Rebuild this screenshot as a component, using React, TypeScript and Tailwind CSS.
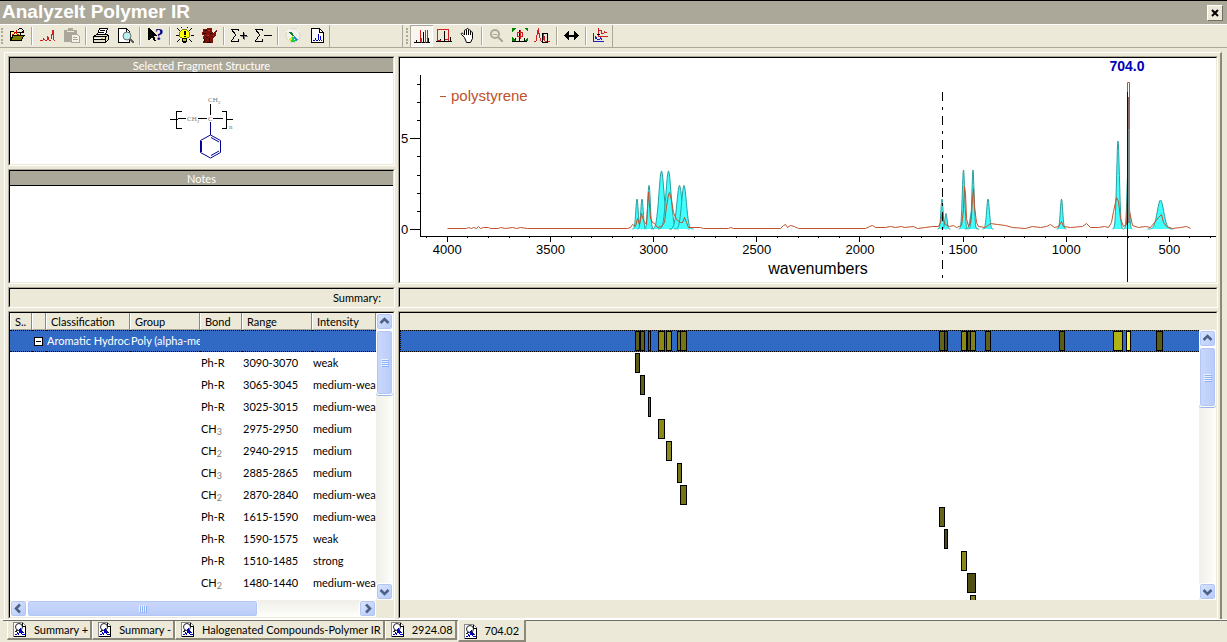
import React, { useState } from 'react'
import clsx from 'clsx'

interface Band {
  bond: string
  sub?: string
  from: number
  to: number
  intensity: string
  color: string
}

const BANDS: Band[] = [
  { bond: 'Ph-R', from: 3090, to: 3070, intensity: 'weak', color: '#5c5c14' },
  { bond: 'Ph-R', from: 3065, to: 3045, intensity: 'medium-weak', color: '#60601a' },
  { bond: 'Ph-R', from: 3025, to: 3015, intensity: 'medium-weak', color: '#5f7058' },
  { bond: 'CH', sub: '3', from: 2975, to: 2950, intensity: 'medium', color: '#8b8b14' },
  { bond: 'CH', sub: '2', from: 2940, to: 2915, intensity: 'medium', color: '#8b8b20' },
  { bond: 'CH', sub: '3', from: 2885, to: 2865, intensity: 'medium', color: '#747418' },
  { bond: 'CH', sub: '2', from: 2870, to: 2840, intensity: 'medium-weak', color: '#757514' },
  { bond: 'Ph-R', from: 1615, to: 1590, intensity: 'medium-weak', color: '#64641a' },
  { bond: 'Ph-R', from: 1590, to: 1575, intensity: 'weak', color: '#4a4a1e' },
  { bond: 'Ph-R', from: 1510, to: 1485, intensity: 'strong', color: '#8b8b14' },
  { bond: 'CH', sub: '2', from: 1480, to: 1440, intensity: 'medium-weak', color: '#505014' },
  { bond: 'CH', sub: '3', from: 1465, to: 1440, intensity: 'medium', color: '#80801e' },
  { bond: 'CH', sub: '3', from: 1393, to: 1368, intensity: 'medium', color: '#60601a' },
  { bond: 'Ph-R', from: 1035, to: 1010, intensity: 'medium', color: '#5c5c14' },
  { bond: 'Ph-R', from: 773, to: 730, intensity: 'strong', color: '#b2b214' },
  { bond: 'Ph-R', from: 708, to: 690, intensity: 'strong', color: '#f2f23c' },
  { bond: 'Ph-R', from: 562, to: 535, intensity: 'medium', color: '#5c5c14' },
]

const TABS = ['Summary +', 'Summary -', 'Halogenated Compounds-Polymer IR', '2924.08', '704.02']

// wavenumber -> x and absorbance -> y inside the plot
const wx = (w: number) => 47.3 + (4000 - w) * 0.2063
const ay = (a: number) => 171 - a * 18.15

/* ---------- panels ---------- */

function Sunken({ children, className, bodyClass }: { children?: React.ReactNode; className?: string; bodyClass?: string }) {
  return (
    <div className={clsx('min-h-0 min-w-0 border border-b-white border-l-[#aca899] border-r-white border-t-[#aca899]', className)}>
      <div className={clsx('h-full overflow-hidden border border-b-[#ece9d8] border-l-black border-r-[#ece9d8] border-t-black', bodyClass)}>
        {children}
      </div>
    </div>
  )
}

function PanelTitle({ children }: { children: React.ReactNode }) {
  return (
    <h2 className="h-[15px] border-b border-black bg-[#aca899] text-center text-[11px] leading-[15px] text-white">{children}</h2>
  )
}

/* ---------- toolbar ---------- */

function Tool({ label, active, narrow, children }: { label: string; active?: boolean; narrow?: boolean; children: React.ReactNode }) {
  return (
    <button
      aria-label={label}
      className={clsx(
        'flex h-[22px] shrink-0 items-center',
        narrow ? 'w-[23px]' : 'w-6',
        active && 'bg-[#f8f6ee] shadow-[inset_1px_1px_0_#aca899,inset_-1px_-1px_0_#fff]',
      )}>
      <svg width="24" height="22" viewBox="0 0 24 22" fill="none" shapeRendering="crispEdges" className="shrink-0">
        {children}
      </svg>
    </button>
  )
}

function Sep() {
  return <div className="mx-[2px] my-[2px] w-[2px] shrink-0 border-l border-[#aca899] border-r border-r-white" />
}

function Grip() {
  return <div className="my-[3px] w-[2px] shrink-0 border-l-2 border-dotted border-[#aca899]" />
}

function MainTools() {
  return (
    <div className="flex h-[22px] border-r border-[#aca899] pl-px">
      <Grip />
      <div className="w-[2px]" />
      <Tool label="Open">
        <path d="M5 6h4l1 1h5v3h-7l-3 5z" fill="#ffff80" />
        <path d="M8 10.500h11l-3 5H5.500z" fill="#808000" stroke="#000" />
        <path d="M5.500 15V6.500h3l1 1h6V10" stroke="#000" />
        <path d="M7 9.500h2M9.500 9V7M11.500 9V5M12 9.500h2" stroke="#e00000" />
        <path d="M13 4.500h1M14 3.500h3M17 4.500h1M18.500 5v3M16 7.500h3M17 6.500h2" stroke="#000" />
      </Tool>
      <Sep />
      <Tool label="Spectrum">
        <path d="M5 15.500h3M8.500 15v-2M9.500 14v1M10 15.500h2M12.500 15v-4M13.500 12v3M14 15.500h2M16.500 14V9M17.500 10V5M18.500 5v10M19 15.500h1" stroke="#d02020" />
      </Tool>
      <Tool label="Paste">
        <path d="M5 5h4V3h5v2h4v12H5z" fill="#aca899" />
        <path d="M8 6.500h7" stroke="#ece9d8" />
        <path d="M12.500 9.500h6l2 2v6h-8z" fill="#f4f2e8" stroke="#aca899" />
        <path d="M14 12.500h4M14 14.500h5" stroke="#aca899" />
      </Tool>
      <Sep />
      <Tool label="Print">
        <path d="M8.500 9.500l2-6h8l-2 6z" fill="#fff" stroke="#000" />
        <path d="M11 5.500h5M10 7.500h5" stroke="#000" />
        <path d="M4.500 11.500l3-2h11l1 1v4l-3 2.500h-12z" fill="#e4e0d0" stroke="#000" />
        <path d="M4.500 11.500h12l3-1M16.500 12v4M5 14.500h11" stroke="#000" />
        <path d="M6 13h9" stroke="#fff" />
        <path d="M12 13.500h2" stroke="#d0c000" />
      </Tool>
      <Tool label="Print preview">
        <path d="M5.500 3.500h8l3 3v11h-11z" fill="#fff" stroke="#000" />
        <path d="M13.500 4v3h3" stroke="#000" />
        <circle cx="14" cy="11" r="4" fill="#b8f0f0" stroke="#707070" shapeRendering="auto" />
        <path d="M17 14l4 4" stroke="#606060" strokeWidth="2" />
      </Tool>
      <Sep />
      <Tool label="Context help">
        <path d="M5 3v12h1l3-3 2 4h2l-2-5h3v-1L6 3z" fill="#000" />
        <text x="12" y="15" className="fill-[#000080] font-['Liberation_Serif',serif] text-[17px] font-bold">?</text>
      </Tool>
      <Sep />
      <Tool label="Hints">
        <path d="M4 3l3 3M19 3l-3 3M4 17l3-3M19 17l-3-3M3 10.500h3M18 10.500h3M8.500 2v1M14.500 2v1" stroke="#000" />
        <path d="M9.500 4.500h4l3 3v4l-3 2h-4l-3-2v-4z" fill="#ffff00" stroke="#808000" />
        <path d="M9.500 13.500h4v3h-4z" fill="#c8c800" stroke="#000" />
        <path d="M11 5.500h1.500v4H11zM11 10.500h1.500V12H11z" fill="#000" />
        <path d="M10 17.500h3" stroke="#000" />
      </Tool>
      <Tool label="Expert">
        <path d="M6 4l3 0 2-1 4 0v3l1 2 3-3 1 0-1 5-3 3v5H6l1-3-1-2 1-3H5z" fill="#7a1408" />
        <path d="M8 5.500h2M13 8.500h2M9 12.500h2M7.500 14v3M12.500 13v4M6 8.500h3M10 17.500h4" stroke="#200000" />
        <path d="M11 5.500h2M10 10.500h2M16 10.500h1" stroke="#c83020" />
      </Tool>
      <Sep />
      <Tool label="Add to summary">
        <path d="M11.500 6V4.500H4.500L8.500 10l-4 6h7V14" stroke="#000" />
        <path d="M5 5l4 5" stroke="#000" />
        <path d="M14 11.500h7M17.500 8v7" stroke="#808080" />
        <path d="M13 10.500h7M16.500 7v7" stroke="#000" />
      </Tool>
      <Tool label="Remove from summary">
        <path d="M11.500 6V4.500H4.500L8.500 10l-4 6h7V14" stroke="#000" />
        <path d="M5 5l4 5" stroke="#000" />
        <path d="M13 10.500h8" stroke="#000" />
      </Tool>
      <Sep />
      <Tool label="Colour scale">
        <circle cx="12" cy="10.500" r="7" fill="#f2f1ea" stroke="#dad8cc" shapeRendering="auto" />
        <path d="M6 7l3-3M16 4l3 3" stroke="#fff" />
        <path d="M8 7h2l2 2 1 2h-2z" fill="#108030" />
        <path d="M12 10l-4 5 2 2z" fill="#e8e020" />
        <path d="M12 10l-2 7h4z" fill="#20d040" />
        <path d="M12.500 10.500l1.500 6 3-2z" fill="#2090d0" />
      </Tool>
      <Tool label="Report">
        <path d="M6.500 3.500h8l4 4v10h-12z" fill="#fff" stroke="#000" />
        <path d="M14.500 4v3.500h4" stroke="#000" />
        <path d="M8 15.500h2M10.500 15v-2M11 15.500h2M13.500 15V9M14 15.500h1M15.500 15v-4M16 15.500h1" stroke="#0000c0" />
      </Tool>
    </div>
  )
}

function PlotTools() {
  return (
    <div className="ml-[72px] flex h-[22px] border-l border-r border-[#aca899] pl-[3px]">
      <Grip />
      <div className="w-[2px]" />
      <Tool narrow active label="Show peaks">
        <path d="M4 17.500h16M6.500 15v2M13.500 7v10M18.500 13v4" stroke="#000" />
        <path d="M10.500 5v12M11.500 13v5M15.500 5v13M17.500 5v12" stroke="#d02020" />
      </Tool>
      <Tool narrow label="Select region">
        <path d="M3 16.500h16M7.500 14v2M11.500 6v10M17.500 12v4" stroke="#000" />
        <path d="M4.500 15.500v-11h11v11M4 15h4M12 14.500h4" stroke="#d02020" />
      </Tool>
      <Tool narrow label="Pan">
        <path
          d="M8.500 12.500l-3-3c-1-1 .5-2 1.500-1l1.500 1.500V5.500c0-1 2-1 2 0V4.500c0-1.500 2-1.500 2 0v1c0-1 2-1 2 0v2c0-1 2-1 2 0v6l-2 4h-4z"
          fill="#fff" stroke="#000" shapeRendering="auto" />
        <path d="M10.500 5v5M12.500 5v5M14.500 6v4" stroke="#000" />
      </Tool>
      <Sep />
      <Tool narrow label="Zoom out">
        <circle cx="10" cy="9" r="4" stroke="#aca899" strokeWidth="2" shapeRendering="auto" />
        <path d="M8 9.500h4" stroke="#aca899" />
        <path d="M13 12l5 5" stroke="#aca899" strokeWidth="2" />
      </Tool>
      <Tool narrow label="Full scale">
        <path d="M4 16.500h15M7.500 13v3M11.500 5v12M16.500 13v3" stroke="#000" />
        <path d="M9.500 7.500h5v4h-5zM12.500 5v9" stroke="#d02020" />
        <path d="M4 3h4l-4 4zM20 3h-4l4 4zM4 16v-4l4 4zM20 16v-4l-4 4z" fill="#008000" />
      </Tool>
      <Tool narrow label="Peak scale">
        <path d="M3 16.500h2M5.500 16v-6M6.500 10V5M7.500 3v6M8.500 8v5M9.500 13v3M10 16.500h2M12.500 15V9M13.500 11v5M14 16.500h5" stroke="#d02020" />
        <path d="M11.500 8.500h5v9h-5z" stroke="#000" />
      </Tool>
      <Sep />
      <Tool narrow label="Fit width">
        <path d="M4 10.500l5-5v4h5v-4l5 5-5 5v-4H9v4z" fill="#000" />
      </Tool>
      <Sep />
      <Tool narrow label="Overlay">
        <path d="M9.500 3v8.500h9M10 5.500h2v3h3M15.500 8V6M16 7.500h2" stroke="#d02020" />
        <path d="M4.500 8v8.500h10M6.500 14v-3M7.500 12v2M8 14.500h3M11.500 14v-2M12.500 13v2" stroke="#2020c0" />
        <path d="M8 9.500h3" stroke="#000" />
      </Tool>
    </div>
  )
}

/* ---------- scroll bars ---------- */

const CHEVRON = {
  up: 'M4.500 10l4-4 4 4',
  down: 'M4.500 7l4 4 4-4',
  left: 'M10 4.500l-4 4 4 4',
  right: 'M7 4.500l4 4-4 4',
}

function Arrow({ dir }: { dir: keyof typeof CHEVRON }) {
  return (
    <button
      aria-label={`Scroll ${dir}`}
      className="h-[17px] w-[17px] shrink-0 rounded-[3px] border border-white bg-linear-to-br from-[#dbe5fe] to-[#b5c9f8] shadow-[inset_0_0_0_1px_#b3c6f4]">
      <svg width="15" height="15" viewBox="1 1 15 15" fill="none">
        <path d={CHEVRON[dir]} stroke="#4d6185" strokeWidth="2.500" />
      </svg>
    </button>
  )
}

function VScroll({ thumb }: { thumb: string }) {
  return (
    <div className="flex w-[17px] shrink-0 flex-col bg-linear-to-r from-[#f0efe8] to-[#fefefb]">
      <Arrow dir="up" />
      <div className="flex-1">
        <div className={clsx('flex flex-col items-center justify-center gap-px rounded-[3px] border border-white bg-linear-to-r from-[#cbd8fd] to-[#b8cbf8] shadow-[inset_0_0_0_1px_#b3c6f4,0_1px_0_#9cb4e8]', thumb)}>
          {[0, 1, 2, 3].map(i => <span key={i} className="h-px w-[7px] bg-[#eef4fe] shadow-[1px_1px_0_#8cb0f8]" />)}
        </div>
      </div>
      <Arrow dir="down" />
    </div>
  )
}

function HScroll() {
  return (
    <div className="flex h-[17px] flex-1 bg-linear-to-b from-[#f0efe8] to-[#fefefb]">
      <Arrow dir="left" />
      <div className="flex-1">
        <div className="flex h-full w-[231px] items-center justify-center gap-px rounded-[3px] border border-white bg-linear-to-b from-[#cbd8fd] to-[#b8cbf8] shadow-[inset_0_0_0_1px_#b3c6f4]">
          {[0, 1, 2, 3].map(i => <span key={i} className="h-[7px] w-px bg-[#eef4fe] shadow-[1px_1px_0_#8cb0f8]" />)}
        </div>
      </div>
      <Arrow dir="right" />
    </div>
  )
}

/* ---------- structure ---------- */

function Structure() {
  return (
    <svg width="64" height="64" viewBox="0 0 64 64" fill="none" shapeRendering="crispEdges" className="mx-auto mt-[23px]">
      <g stroke="#000">
        <path d="M0 23.500h8M11.500 15.500h-5v17h5M8 22.500h8M28 22.500h9M43 22.500h10M52 15.500h4.500v17H52M56 23.500h7M40.500 8v11" />
      </g>
      <g className="fill-[#777777] font-['Liberation_Serif',serif] text-[7px]">
        <text x="38" y="6">CH<tspan className="text-[5px]" dy="2">3</tspan></text>
        <text x="17" y="25">CH<tspan className="text-[5px]" dy="2">2</tspan></text>
        <text x="38" y="25">C</text>
        <text x="59" y="33">n</text>
      </g>
      <path d="M40.500 26v13" stroke="#000080" />
      <g stroke="#000090" shapeRendering="auto">
        <path d="M40.500 39l10 5.500v12l-10 5.500-10-5.500v-12zM41 41.500l8 4.500M41 59.500l8-4.500" />
        <path d="M31.500 45v11" stroke="#0000ff" />
      </g>
    </svg>
  )
}

/* ---------- spectrum ---------- */

// [centre x, absorbance, spread]
const PEAKS: [number, number, number][] = [
  [237, 1.65, 1.2], [242, 1.65, 1.2], [249, 2.4, 1.3],
  [261.500, 3.2, 2.6], [268.500, 3.2, 2.6], [279.500, 2.4, 2.6], [284, 2.4, 2.4],
  [542, 1.65, 1.1], [546, 0.85, 1.1], [563.500, 3.25, 1.2], [572, 1, 1.8], [573, 3.25, 1.1],
  [588, 1.65, 1.4], [661.500, 1.65, 1.2], [718, 4.85, 1.4], [728, 3.3, 1.1], [760.500, 1.6, 3.2],
]

function peakPath([cx, h, s]: [number, number, number]) {
  let d = `M${cx - 4 * s} ${ay(0)}`
  for (let t = -4; t <= 4; t += 0.25) {
    d += `L${(cx + t * s).toFixed(1)} ${ay(h * Math.exp((-t * t) / 2)).toFixed(1)}`
  }
  return d
}

const TRACE =
  '47,170 66,170 68,169 71,170 73,169 76,170 78,168 80,170 83,169 88,169 90,170 98,170 100,169 105,170 112,169 116,170 120,169 127,170 ' +
  '227,170 230,169 232,166 235,168 237,160 239,166 241,155 243,162 246,166 247,150 248,134 250,160 252,164 254,165 257,169 261,168 ' +
  '264,164 266,148 268,136 269,134 271,142 273,154 276,161 280,164 282,164 284,159 286,164 288,169 300,169 303,170 328,170 330,169 ' +
  '333,170 380,170 383,167 385,166 387,169 390,167 394,168 398,170 465,170 469,168 472,167 475,169 485,169 490,168 495,169 501,168 ' +
  '504,169 513,168 517,170 525,169 532,168 538,168 540,164 541,158 542,154 543,162 545,166 549,168 553,167 556,169 561,167 562,160 ' +
  '563,150 564,128 565,135 566,160 568,168 570,164 571,158 572,140 573,130 574,148 576,164 578,168 585,169 590,165 597,166 605,167 ' +
  '612,169 625,170 632,168 640,169 646,168 650,166 654,169 658,168 661,163 663,168 670,169 682,168 686,165 690,169 698,169 704,168 ' +
  '708,169 711,164 713,153 715,144 716,139 718,143 720,160 723,168 726,166 727,140 727,24 729,24 729,153 732,167 738,169 ' +
  '745,168 750,169 754,164 758,159 761,156 763,164 766,168 772,170 780,169 786,168 790,170'

function Spectrum() {
  const minor: number[] = []
  for (let w = 4100; w >= 300; w -= 100) minor.push(w)
  const major = [4000, 3500, 3000, 2500, 2000, 1500, 1000, 500]

  return (
    <svg viewBox="0 0 816 224" className="h-auto w-full font-['Liberation_Sans',Arial,sans-serif]" role="img" aria-label="Polystyrene spectrum">
      <g stroke="#000" fill="none" shapeRendering="crispEdges">
        <path d="M20.500 17v162M20 178.500h796" />
        {[1, 2, 3, 4, 6, 7, 8].map(v => <path key={v} d={`M17 ${Math.round(ay(v)) + 0.5}h3`} />)}
        <path d="M10 80.500h10M10 171.500h10" />
        {minor.map(w => <path key={w} d={`M${Math.floor(wx(w)) + 0.5} 179v1`} />)}
        {major.map(w => <path key={w} d={`M${Math.floor(wx(w)) + 0.5} 179v5`} />)}
      </g>

      <g fill="#40ffff" stroke="#2b9f9f">
        {PEAKS.map(p => <path key={p[0]} d={peakPath(p)} />)}
      </g>
      <polyline points={TRACE} transform="translate(0.5 0.5)" fill="none" stroke="#c0512b" strokeLinejoin="round" />
      <g shapeRendering="crispEdges">
        <path d="M729 39v32" stroke="#8a6a60" strokeWidth="2" />
        <path d="M729 71v94" stroke="#7d8a86" strokeWidth="2" />
        <path d="M727.500 34v190" stroke="#0000a0" />
        <path d="M542.500 34v186" stroke="#000" strokeDasharray="9 6 3 6" />
      </g>

      <g className="fill-black text-[13px]">
        <text x="1" y="85">5</text>
        <text x="1" y="176">0</text>
        {major.map(w => <text key={w} x={wx(w)} y="196" textAnchor="middle">{w}</text>)}
      </g>
      <text x="418" y="216" textAnchor="middle" className="fill-black text-[16px]">wavenumbers</text>
      <path d="M40 38.500h6" stroke="#c0512b" shapeRendering="crispEdges" />
      <text x="51" y="43" className="fill-[#c0512b] text-[15px]">polystyrene</text>
      <text x="727" y="13" textAnchor="middle" className="fill-[#0000b4] text-[14px] font-bold">704.0</text>
    </svg>
  )
}

/* ---------- band table and map ---------- */

const COLUMNS = [
  { label: 'S..', width: 'w-[22px]' },
  { label: '', width: 'w-[14px]' },
  { label: 'Classification', width: 'w-[84px]' },
  { label: 'Group', width: 'w-[70px]' },
  { label: 'Bond', width: 'w-[42px]' },
  { label: 'Range', width: 'w-[70px]' },
  { label: 'Intensity', width: 'w-[64px]' },
]

function BandTable() {
  const [open, setOpen] = useState(true)
  const picked = 'h-[22px] overflow-hidden border-y border-dotted border-black bg-[#316ac5] p-0 pl-px'
  const cell = 'h-[22px] overflow-hidden p-0 pl-px'

  return (
    <table className="w-[366px] table-fixed border-separate border-spacing-0 whitespace-nowrap text-[11px] leading-[14px]">
      <thead>
        <tr>
          {COLUMNS.map((c, i) => (
            <th key={i} className={clsx('h-[17px] overflow-hidden border-b border-l border-r border-b-[#aca899] border-l-white border-r-[#8c897a] bg-[#ece9d8] p-0 pl-1 pt-px text-left font-normal', c.width)}>
              {c.label}
            </th>
          ))}
        </tr>
      </thead>
      <tbody>
        <tr className="text-white">
          <td className={picked} />
          <td className={picked}>
            <button aria-label="Collapse group" onClick={() => setOpen(!open)}
              className="ml-px flex h-[9px] w-[9px] items-center justify-center border border-black bg-white">
              <span className="h-px w-[5px] bg-black" />
            </button>
          </td>
          <td className={picked}>Aromatic Hydroca</td>
          <td className={picked}>Poly (alpha-me</td>
          <td className={picked} />
          <td className={picked} />
          <td className={picked} />
        </tr>
        {open && BANDS.slice(0, 11).map(b => (
          <tr key={b.from}>
            <td colSpan={4} className={cell} />
            <td className={cell}>{b.bond}{b.sub && <sub className="text-[9px] text-[#808080]">{b.sub}</sub>}</td>
            <td className={cell}>{b.from}-{b.to}</td>
            <td className={cell}>{b.intensity}</td>
          </tr>
        ))}
      </tbody>
    </table>
  )
}

function Bar({ band }: { band: Band }) {
  const left = Math.round(wx(band.from) - 0.3)
  const right = Math.round(wx(band.to) - 0.3) + 1
  return (
    <div className="absolute top-px h-5 border border-black" style={{ left, width: right - left, background: band.color }} />
  )
}

function BandMap() {
  return (
    <div className="min-w-0 flex-1 overflow-hidden bg-white">
      <div className="relative h-[22px] bg-[#316ac5]">
        <div className="h-full border-y border-l border-dotted border-black" />
        {BANDS.map(b => <Bar key={b.from} band={b} />)}
      </div>
      {BANDS.slice(0, 12).map(b => (
        <div key={b.from} className="relative h-[22px]"><Bar band={b} /></div>
      ))}
    </div>
  )
}

/* ---------- tabs ---------- */

function Tab({ label, active, onClick }: { label: string; active: boolean; onClick: () => void }) {
  return (
    <button
      role="tab"
      aria-selected={active}
      onClick={onClick}
      className={clsx(
        'flex shrink-0 items-center gap-[7px] border-b-2 border-l border-r-2 border-b-[#8c897a] border-l-white border-r-[#8c897a] bg-[#ece9d8] pl-[5px] pr-[2px] text-[11px] leading-[14px]',
        active ? 'relative -mt-px ml-px h-[22px] pr-[5px] pt-[2px]' : 'h-[19px]',
      )}>
      <svg width="14" height="15" viewBox="0 0 14 15" fill="none" shapeRendering="crispEdges">
        <path d="M.5.500h9l3 3v11H.5z" fill="#fff" stroke="#888" />
        <path d="M9.500 1v3h3M.500 14.500h12V5" stroke="#000" />
        <circle cx="6" cy="5" r="3.500" stroke="#222" shapeRendering="auto" />
        <path d="M4.500 8l-2 2M7.500 8l3 3" stroke="#222" />
        <path d="M2 12.500h2M4.500 12v-2M5 11.500h1M6.500 11V7M7.500 6v4M8.500 9v3M7 10.500h3M9 12.500h3M5 12.500h1" stroke="#0000c0" />
      </svg>
      {label}
    </button>
  )
}

export default function App() {
  const [tab, setTab] = useState('704.02')

  return (
    <div className="flex h-screen min-h-[480px] flex-col overflow-hidden bg-[#ece9d8] font-[Lato,Arial,sans-serif] text-black">
      <header className="flex h-[25px] shrink-0 items-center justify-between border-b border-t border-b-white border-t-black bg-[#aca899] pl-[2px] pr-1">
        <h1 className="pb-[2px] font-['Liberation_Sans',Arial,sans-serif] text-[19px] font-bold leading-[21px] text-white">AnalyzeIt Polymer IR</h1>
        <button aria-label="Close" className="flex h-4 w-4 items-center justify-center border border-b-[#716f64] border-l-white border-r-[#716f64] border-t-white bg-[#ece9d8]">
          <svg width="8" height="8" viewBox="0 0 8 8"><path d="M1 1l6 6M7 1L1 7" stroke="#000" strokeWidth="2" /></svg>
        </button>
      </header>

      <div className="flex h-[23px] shrink-0 border-b border-[#aca899]">
        <MainTools />
        <PlotTools />
      </div>

      <main className="ml-1 mr-[5px] mt-1 grid min-h-0 flex-1 grid-cols-[387px_minmax(0,1fr)] grid-rows-[110px_115px_21px_minmax(0,1fr)] gap-[3px] border-l border-r-2 border-t border-l-white border-r-[#8c897a] border-t-white pl-[3px] pr-[2px] pt-[3px]">
        <Sunken bodyClass="bg-white">
          <PanelTitle>Selected Fragment Structure</PanelTitle>
          <Structure />
        </Sunken>
        <Sunken className="row-span-2" bodyClass="bg-white">
          <Spectrum />
        </Sunken>
        <Sunken bodyClass="bg-white">
          <PanelTitle>Notes</PanelTitle>
        </Sunken>
        <Sunken bodyClass="pr-3 text-right text-[11px] leading-[18px]">Summary:</Sunken>
        <Sunken />
        <Sunken bodyClass="flex flex-col bg-white">
          <div className="flex min-h-0 flex-1">
            <div className="min-w-0 flex-1 overflow-hidden"><BandTable /></div>
            <VScroll thumb="h-[65px]" />
          </div>
          <div className="flex bg-[#ece9d8] pr-[17px]"><HScroll /></div>
        </Sunken>
        <Sunken bodyClass="flex pb-[17px] pt-[17px]">
          <BandMap />
          <VScroll thumb="h-[60px]" />
        </Sunken>
      </main>

      <div className="h-[23px] shrink-0 border-t border-white pl-[3px]">
        <div role="tablist" className="flex h-[22px] border-t border-[#716f64] pl-1">
          {TABS.map(t => <Tab key={t} label={t} active={t === tab} onClick={() => setTab(t)} />)}
        </div>
      </div>
    </div>
  )
}
